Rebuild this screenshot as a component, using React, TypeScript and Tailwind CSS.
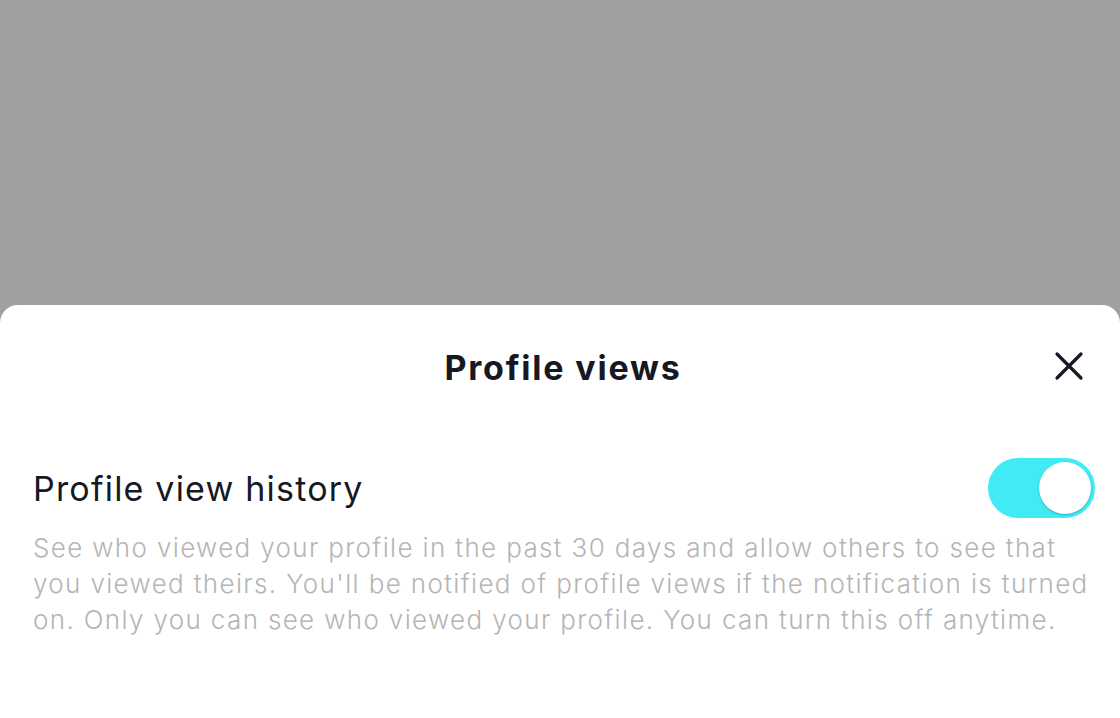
export default function App() {
  return (
    <div
      className="w-[1120px] h-[718px] bg-[#a0a0a0] flex flex-col overflow-hidden"
      style={{ fontFamily: "Inter, 'Noto Sans', sans-serif" }}
    >
      <div className="h-[305px] shrink-0" />
      <div className="flex-1 bg-white rounded-t-[18px] relative">
        <div className="h-[124px] flex items-center justify-center">
          <h1 className="text-[34px] font-bold text-[#161823] tracking-[1.8px] ml-[6px]">Profile views</h1>
          <button className="absolute right-[34px] top-[44px] w-[34px] h-[34px] flex items-center justify-center">
            <svg width="30" height="30" viewBox="0 0 30 30" fill="none">
              <path d="M3 3L27 27M27 3L3 27" stroke="#161823" strokeWidth="3.2" strokeLinecap="round" />
            </svg>
          </button>
        </div>
        <div className="pl-[33px] pr-[30px] pt-[29px]">
          <div className="flex items-center justify-between">
            <span className="text-[34px] text-[#161823] font-normal tracking-[1.2px]">Profile view history</span>
            <div className="w-[107px] h-[60px] rounded-full bg-[#42eaf5] flex items-center justify-end pr-[4px] mr-[-5px]">
              <div className="w-[52px] h-[52px] rounded-full bg-white shadow-[0_1px_2px_rgba(0,0,0,0.25)]" />
            </div>
          </div>
          <p className="mt-[12px] text-[26px] leading-[36px] font-light text-[#b5b5b5] tracking-[1.35px]">
            See who viewed your profile in the past 30 days and allow others to see that you viewed theirs. You'll be notified of profile views if the notification is turned on. Only you can see who viewed your profile. You can turn this off anytime.
          </p>
        </div>
      </div>
    </div>
  )
}
